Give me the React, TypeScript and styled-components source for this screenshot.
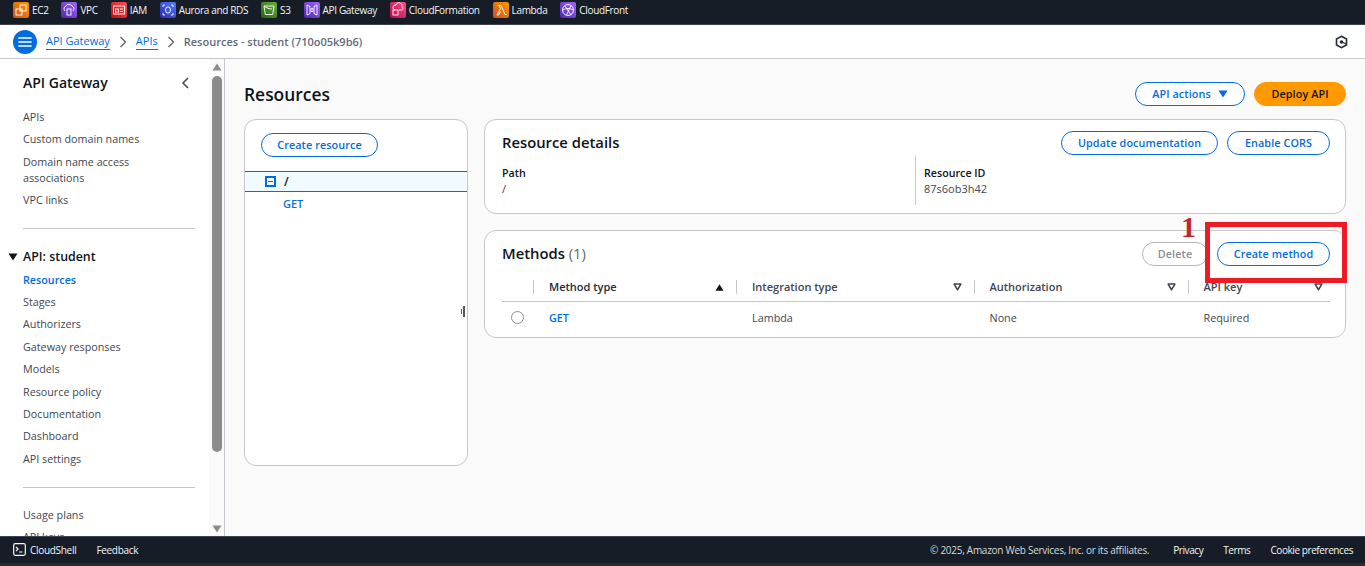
import React from "react";
import styled, { createGlobalStyle } from "styled-components";

const Global = createGlobalStyle`
  html, body { margin: 0; padding: 0; height: 100%; background: #fff; overflow: hidden; }
  #root { height: 566px; }
  * { box-sizing: border-box; }
  body { font-family: "Open Sans", "Noto Sans", sans-serif; font-size: 11px; color: #0f141a; }
`;

const Page = styled.div`
  position: relative; width: 1365px; height: 566px; display: flex; flex-direction: column; overflow: hidden;
`;
const TopBar = styled.div`
  height: 25px; flex: none; background: #161d26; border-bottom: 1px solid #3b4350; display: flex; align-items: center; padding: 0 0 5px 13px; gap: 12.9px;
`;
const Shortcut = styled.div`
  display: flex; align-items: center; gap: 3px; color: #f4f5f6; font-size: 10px; letter-spacing: -0.33px; line-height: 14px;
`;
const ServiceTile = styled.span<{ $a: string; $b: string }>`
  width: 16px; height: 16px; border-radius: 2px; display: block; background: linear-gradient(45deg, ${p => p.$a}, ${p => p.$b}); flex: none;
`;
const Crumbs = styled.div`
  height: 34px; flex: none; background: #fff; border-bottom: 1px solid #c6c6cd; display: flex; align-items: center; padding: 0 17px 0 13px;
`;
const MenuButton = styled.span`
  width: 24px; height: 24px; border-radius: 50%; background: #006ce0; display: flex; align-items: center; justify-content: center; margin-right: 9px;
`;
const CrumbLink = styled.a`
  color: #006ce0; font-size: 11px; line-height: 15px; border-bottom: 1px solid #006ce0; padding-bottom: 1px;
`;
const CrumbCurrent = styled.span`
  color: #5f6b7a; font-size: 11px; font-weight: 600;
`;
const Chevron = styled.span`
  display: flex; margin: 0 9px 0 9px; color: #656871;
`;
const Spacer = styled.span`flex: 1;`;
const Body = styled.div`flex: 1; display: flex; min-height: 0;`;
const Side = styled.aside`
  width: 225px; flex: none; background: #fff; border-right: 1px solid #c6c6cd; display: flex; overflow: hidden;
`;
const SideContent = styled.div`flex: 1; padding: 0 14px 0 23px; min-width: 0;`;
const SideHead = styled.div`
  display: flex; justify-content: space-between; align-items: center; height: 47px; font-size: 14px; font-weight: 600; color: #0f141a;
`;
const SideBack = styled.span`display: flex; margin-right: 5px;`;
const NavList = styled.div`display: flex; flex-direction: column;`;
const NavItem = styled.a<{ $active?: boolean }>`
  display: block; font-size: 10.75px; line-height: 16px; padding: 3px 0 3.4px;
  color: ${p => (p.$active ? "#006ce0" : "#424650")}; font-weight: ${p => (p.$active ? 600 : 400)};
`;
const NavDivider = styled.hr<{ $mt: number; $mb: number }>`
  border: 0; border-top: 1px solid #c6c6cd; margin: ${p => p.$mt}px 0 ${p => p.$mb}px;
`;
const NavSection = styled.div`
  display: flex; align-items: center; gap: 5px; font-size: 12.4px; font-weight: 600; line-height: 16px; margin: 0 0 4px -15px; color: #0f141a;
`;
const Scrollbar = styled.div`
  width: 15px; flex: none; background: #fafafa; display: flex; flex-direction: column; align-items: center; padding: 3px 0 2px;
`;
const ScrollThumb = styled.div`
  width: 10px; height: 376px; border-radius: 5px; background: #8b8b8b; margin: 4px 0 auto;
`;
const Main = styled.main`
  flex: 1; background: #fafafa; padding: 0 19px; min-width: 0;
`;
const PageHead = styled.div`
  height: 60px; display: flex; align-items: center; gap: 9px; padding-top: 10px;
`;
const H1 = styled.h1`
  margin: 0; font-size: 17.4px; font-weight: 600; flex: 1; line-height: 24px; color: #0f141a;
`;
const Btn = styled.button<{ $v?: "primary" | "normal" | "disabled"; $w: number }>`
  width: ${p => p.$w}px; height: 24px; border-radius: 12px; font: 600 10.8px/1 "Open Sans", sans-serif; letter-spacing: 0.1px; padding: 0; display: inline-flex; align-items: center; justify-content: center; gap: 7px; background: ${p => (p.$v === "primary" ? "#ff9900" : "#fff")}; color: ${p => (p.$v === "primary" ? "#0f141a" : p.$v === "disabled" ? "#8c8c94" : "#006ce0")}; border: 1px solid ${p => (p.$v === "primary" ? "#ff9900" : p.$v === "disabled" ? "#b4b4bb" : "#006ce0")};
`;
const Columns = styled.div`display: flex; gap: 16px; align-items: flex-start;`;
const Card = styled.section`
  background: #fff; border: 1px solid #c6c6cd; border-radius: 12px;
`;
const TreeCard = styled(Card)`
  width: 224px; height: 347px; flex: none; position: relative; padding-top: 13px;
`;
const TreeAction = styled.div`padding: 0 16px 13px; height: 38px;`;
const TreeRoot = styled.div`
  height: 21px; background: #f0fbff; border-top: 1px solid #006ce0; border-bottom: 1px solid #006ce0; display: flex; align-items: center; padding-left: 20px; gap: 8px; font-size: 12px; font-weight: 600;
`;
const Collapse = styled.span`
  width: 11px; height: 11px; border: 2px solid #006ce0; display: flex; align-items: center; justify-content: center;
  &::after { content: ""; width: 5px; height: 1.5px; background: #006ce0; }
`;
const TreeLeaf = styled.div`
  color: #0972d3; font-weight: 600; font-size: 11px; line-height: 16px; padding: 4px 0 0 38px;
`;
const ResizeGrip = styled.div`
  position: absolute; right: 2px; top: 186px; display: flex; align-items: center; gap: 1px;
  &::before { content: ""; width: 1px; height: 5px; background: #555; }
  &::after { content: ""; width: 2px; height: 11px; background: #555; }
`;
const RightColumn = styled.div`flex: 1; display: flex; flex-direction: column; gap: 16px; min-width: 0;`;
const DetailCard = styled(Card)`height: 95px; padding: 10px 15px 0 17px;`;
const MethodsCard = styled(Card)`height: 108px; padding: 10px 0 0 17px;`;
const CardHead = styled.div<{ $inset?: boolean }>`
  display: flex; align-items: center; gap: 9px; height: 26px; padding-right: ${p => (p.$inset ? 15 : 0)}px;
`;
const H2 = styled.h2`
  margin: 0 0 2px; flex: 1; font-size: 14.8px; font-weight: 600; line-height: 20px; color: #0f141a;
  small { font-size: 14.8px; font-weight: 400; color: #656871; }
`;
const DetailRow = styled.div`display: grid; grid-template-columns: 413px 1fr;`;
const DetailCell = styled.div<{ $rule?: boolean }>`
  height: 49px; padding: 9px 0 0 ${p => (p.$rule ? 8 : 0)}px; border-left: ${p => (p.$rule ? "1px solid #c6c6cd" : "0")}; font-size: 11px; line-height: 16px; color: #424650;
`;
const DetailKey = styled.div`font-weight: 600; color: #0f141a; font-size: 10.7px;`;
const Table = styled.div`margin: 9px 15px 0 0;`;
const Row = styled.div`display: grid; grid-template-columns: 31px 203px 237.5px 214px 1fr; align-items: center;`;
const HeadRow = styled(Row)`height: 26px; border-bottom: 1px solid #c6c6cd; padding-bottom: 3px;`;
const BodyRow = styled(Row)`height: 33px; padding-bottom: 2px;`;
const Th = styled.div<{ $sorted?: boolean }>`
  display: flex; align-items: center; justify-content: space-between; height: 14px; border-left: 1px solid #c6c6cd; padding: 0 12px 0 15px; font-size: 11px; font-weight: 600; color: ${p => (p.$sorted ? "#232b37" : "#424650")}; line-height: 14px;
  &:last-child { padding-right: 7px; }
`;
const ThEmpty = styled.div``;
const Td = styled.div<{ $link?: boolean }>`
  padding-left: 16px; font-size: 10.8px; font-weight: ${p => (p.$link ? 600 : 400)}; color: ${p => (p.$link ? "#006ce0" : "#424650")};
`;
const Radio = styled.span`
  display: block; width: 13px; height: 13px; border-radius: 50%; border: 1px solid #8c8c94; margin-left: 9px; background: #fff;
`;
const Footer = styled.footer`
  height: 30px; flex: none; background: #161d26; border-top: 1px solid #3b4350; border-bottom: 3px solid #2a2a26; display: flex; align-items: center; padding: 0 12px 1px 13px; font-size: 10px; letter-spacing: -0.3px; color: #f4f5f6;
`;
const FooterShell = styled.span`display: flex; align-items: center; gap: 4px; margin-right: 20px;`;
const FooterLink = styled.span`margin-left: 20px; letter-spacing: -0.42px;`;
const Copy = styled.span`color: #d5dbdb; margin-right: 4px; letter-spacing: -0.27px;`;
const Highlight = styled.div`
  position: absolute; left: 1205px; top: 222px; width: 142px; height: 61px; border: 5px solid #ed1c24; pointer-events: none;
`;
const Callout = styled.div`
  position: absolute; left: 1181px; top: 212px; color: #c1272d; font: 700 30px/30px "Liberation Serif", serif;
`;

const Caret = ({ d = "down", size = 8, fill = "#424650" }: { d?: string; size?: number; fill?: string }) => (
  <svg width={size} height={size} viewBox="0 0 10 10">
    <path d={d === "up" ? "M5 1.5 9.5 8.5H.5z" : "M.5 1.5h9L5 8.5z"} fill={fill} />
  </svg>
);
const FilterCaret = () => (
  <svg width="9" height="8" viewBox="0 0 10 9">
    <path d="M1.2 1.2h7.6L5 7.6z" fill="#fff" stroke="#424650" strokeWidth="1.7" strokeLinejoin="round" />
  </svg>
);
const Sep = () => (
  <Chevron>
    <svg width="8" height="12" viewBox="0 0 8 12"><path d="M1.5 1 6.5 6l-5 5" fill="none" stroke="currentColor" strokeWidth="1.4" /></svg>
  </Chevron>
);

const services: [string, string, string, React.ReactNode][] = [
  ["EC2", "#c8511b", "#ff9900", <><rect x="3" y="7" width="6" height="6" /><rect x="7" y="3" width="6" height="6" /></>],
  ["VPC", "#4d27a8", "#a166ff", <><path d="M4 9a3 3 0 0 1 1-5 3.5 3.5 0 0 1 6 0 3 3 0 0 1 1 5" /><rect x="6" y="7" width="4" height="6" /></>],
  ["IAM", "#bd0816", "#ff5252", <><rect x="2.5" y="4" width="11" height="8" /><rect x="4.5" y="7" width="3" height="3" /><path d="M9 7h3M9 9.5h3" /></>],
  ["Aurora and RDS", "#2e27ad", "#527fff", <><path d="M3 5V3h2M11 3h2v2M13 11v2h-2M5 13H3v-2" /><ellipse cx="8" cy="8" rx="2.5" ry="3.2" /></>],
  ["S3", "#1b660f", "#6cae3e", <><path d="M3 4h10l-1.3 8.5H4.3z" /><path d="M3 4c2 2 6 3 8 3" /></>],
  ["API Gateway", "#4d27a8", "#a166ff", <><path d="M3 3v10l3-1.5v-7zM13 3v10l-3-1.5v-7zM7.5 6 6.8 8l.7 2M8.5 6l.7 2-.7 2" /></>],
  ["CloudFormation", "#b0084d", "#ff4f8b", <><path d="M5 8a2.5 2.5 0 0 1 1-5 3 3 0 0 1 6 1.5 2 2 0 0 1 0 3.5H9" /><rect x="3" y="8" width="5" height="5" /></>],
  ["Lambda", "#c8511b", "#ff9900", <><path d="M4 13 7.5 6.5 6 3.5H4.5M6 3.5h2L12 12.500h1.500M7.500 9.500 5.500 13H4" /></>],
  ["CloudFront", "#4d27a8", "#a166ff", <><circle cx="8" cy="8" r="5.5" /><path d="M5 4 11 13M11 3.5 6.500 13M3 8c3-2 7-2 10 0" /></>],
];

const nav1 = ["APIs", "Custom domain names"];
const nav2 = ["Stages", "Authorizers", "Gateway responses", "Models", "Resource policy", "Documentation", "Dashboard", "API settings"];

export default function App() {
  return (
    <Page>
      <Global />
      <TopBar>
        {services.map(([name, a, b, art]) => (
          <Shortcut key={name}>
            <ServiceTile $a={a} $b={b}>
              <svg width="16" height="16" viewBox="0 0 16 16" fill="none" stroke="#fff" strokeWidth="0.9">{art}</svg>
            </ServiceTile>
            {name}
          </Shortcut>
        ))}
      </TopBar>
      <Crumbs>
        <MenuButton>
          <svg width="14" height="12" viewBox="0 0 14 12"><path d="M1 2h12M1 6h12M1 10h12" stroke="#fff" strokeWidth="1.7" strokeLinecap="round" /></svg>
        </MenuButton>
        <CrumbLink>API Gateway</CrumbLink>
        <Sep />
        <CrumbLink>APIs</CrumbLink>
        <Sep />
        <CrumbCurrent>Resources - student (710o05k9b6)</CrumbCurrent>
        <Spacer />
        <svg width="13" height="14" viewBox="0 0 13 14">
          <path d="M6.5 1.3 11.5 4v6l-5 2.7L1.5 10V4z" fill="none" stroke="#232b37" strokeWidth="1.6" />
          <circle cx="6.5" cy="7" r="1.8" fill="#232b37" />
          <path d="M7 7l4 2" stroke="#232b37" strokeWidth="1.3" />
        </svg>
      </Crumbs>
      <Body>
        <Side>
          <SideContent>
            <SideHead>
              API Gateway
              <SideBack>
                <svg width="9" height="12" viewBox="0 0 9 12"><path d="M7 1 2 6l5 5" fill="none" stroke="#424650" strokeWidth="1.5" /></svg>
              </SideBack>
            </SideHead>
            <NavList>
              {nav1.map(n => <NavItem key={n}>{n}</NavItem>)}
              <NavItem>Domain name access<br />associations</NavItem>
              <NavItem>VPC links</NavItem>
            </NavList>
            <NavDivider $mt={16} $mb={20} />
            <NavSection><Caret size={10} fill="#0f141a" />API: student</NavSection>
            <NavList>
              <NavItem $active>Resources</NavItem>
              {nav2.map(n => <NavItem key={n}>{n}</NavItem>)}
            </NavList>
            <NavDivider $mt={17} $mb={16} />
            <NavList>
              <NavItem>Usage plans</NavItem>
              <NavItem>API keys</NavItem>
            </NavList>
          </SideContent>
          <Scrollbar>
            <Caret d="up" size={10} fill="#8b8b8b" />
            <ScrollThumb />
            <Caret size={10} fill="#8b8b8b" />
          </Scrollbar>
        </Side>
        <Main>
          <PageHead>
            <H1>Resources</H1>
            <Btn $w={110}>API actions <Caret size={10} fill="#006ce0" /></Btn>
            <Btn $w={92} $v="primary">Deploy API</Btn>
          </PageHead>
          <Columns>
            <TreeCard>
              <TreeAction><Btn $w={117}>Create resource</Btn></TreeAction>
              <TreeRoot><Collapse />/</TreeRoot>
              <TreeLeaf>GET</TreeLeaf>
              <ResizeGrip />
            </TreeCard>
            <RightColumn>
              <DetailCard>
                <CardHead>
                  <H2>Resource details</H2>
                  <Btn $w={157}>Update documentation</Btn>
                  <Btn $w={103}>Enable CORS</Btn>
                </CardHead>
                <DetailRow>
                  <DetailCell><DetailKey>Path</DetailKey>/</DetailCell>
                  <DetailCell $rule><DetailKey>Resource ID</DetailKey>87s6ob3h42</DetailCell>
                </DetailRow>
              </DetailCard>
              <MethodsCard>
                <CardHead $inset>
                  <H2>Methods <small>(1)</small></H2>
                  <Btn $w={66} $v="disabled">Delete</Btn>
                  <Btn $w={113}>Create method</Btn>
                </CardHead>
                <Table>
                  <HeadRow>
                    <ThEmpty />
                    <Th $sorted>Method type <Caret d="up" size={9} fill="#0f141a" /></Th>
                    <Th>Integration type <FilterCaret /></Th>
                    <Th>Authorization <FilterCaret /></Th>
                    <Th>API key <FilterCaret /></Th>
                  </HeadRow>
                  <BodyRow>
                    <Radio />
                    <Td $link>GET</Td>
                    <Td>Lambda</Td>
                    <Td>None</Td>
                    <Td>Required</Td>
                  </BodyRow>
                </Table>
              </MethodsCard>
            </RightColumn>
          </Columns>
        </Main>
      </Body>
      <Footer>
        <FooterShell>
          <svg width="13" height="13" viewBox="0 0 13 13"><rect x="0.7" y="0.7" width="11.6" height="11.6" rx="1.5" fill="none" stroke="#f4f5f6" strokeWidth="1.2" /><path d="M3 4l2.2 2L3 8M6 9h3.5" fill="none" stroke="#f4f5f6" strokeWidth="1.1" /></svg>
          CloudShell
        </FooterShell>
        <span>Feedback</span>
        <Spacer />
        <Copy>© 2025, Amazon Web Services, Inc. or its affiliates.</Copy>
        <FooterLink>Privacy</FooterLink>
        <FooterLink>Terms</FooterLink>
        <FooterLink>Cookie preferences</FooterLink>
      </Footer>
      <Highlight />
      <Callout>1</Callout>
    </Page>
  );
}
